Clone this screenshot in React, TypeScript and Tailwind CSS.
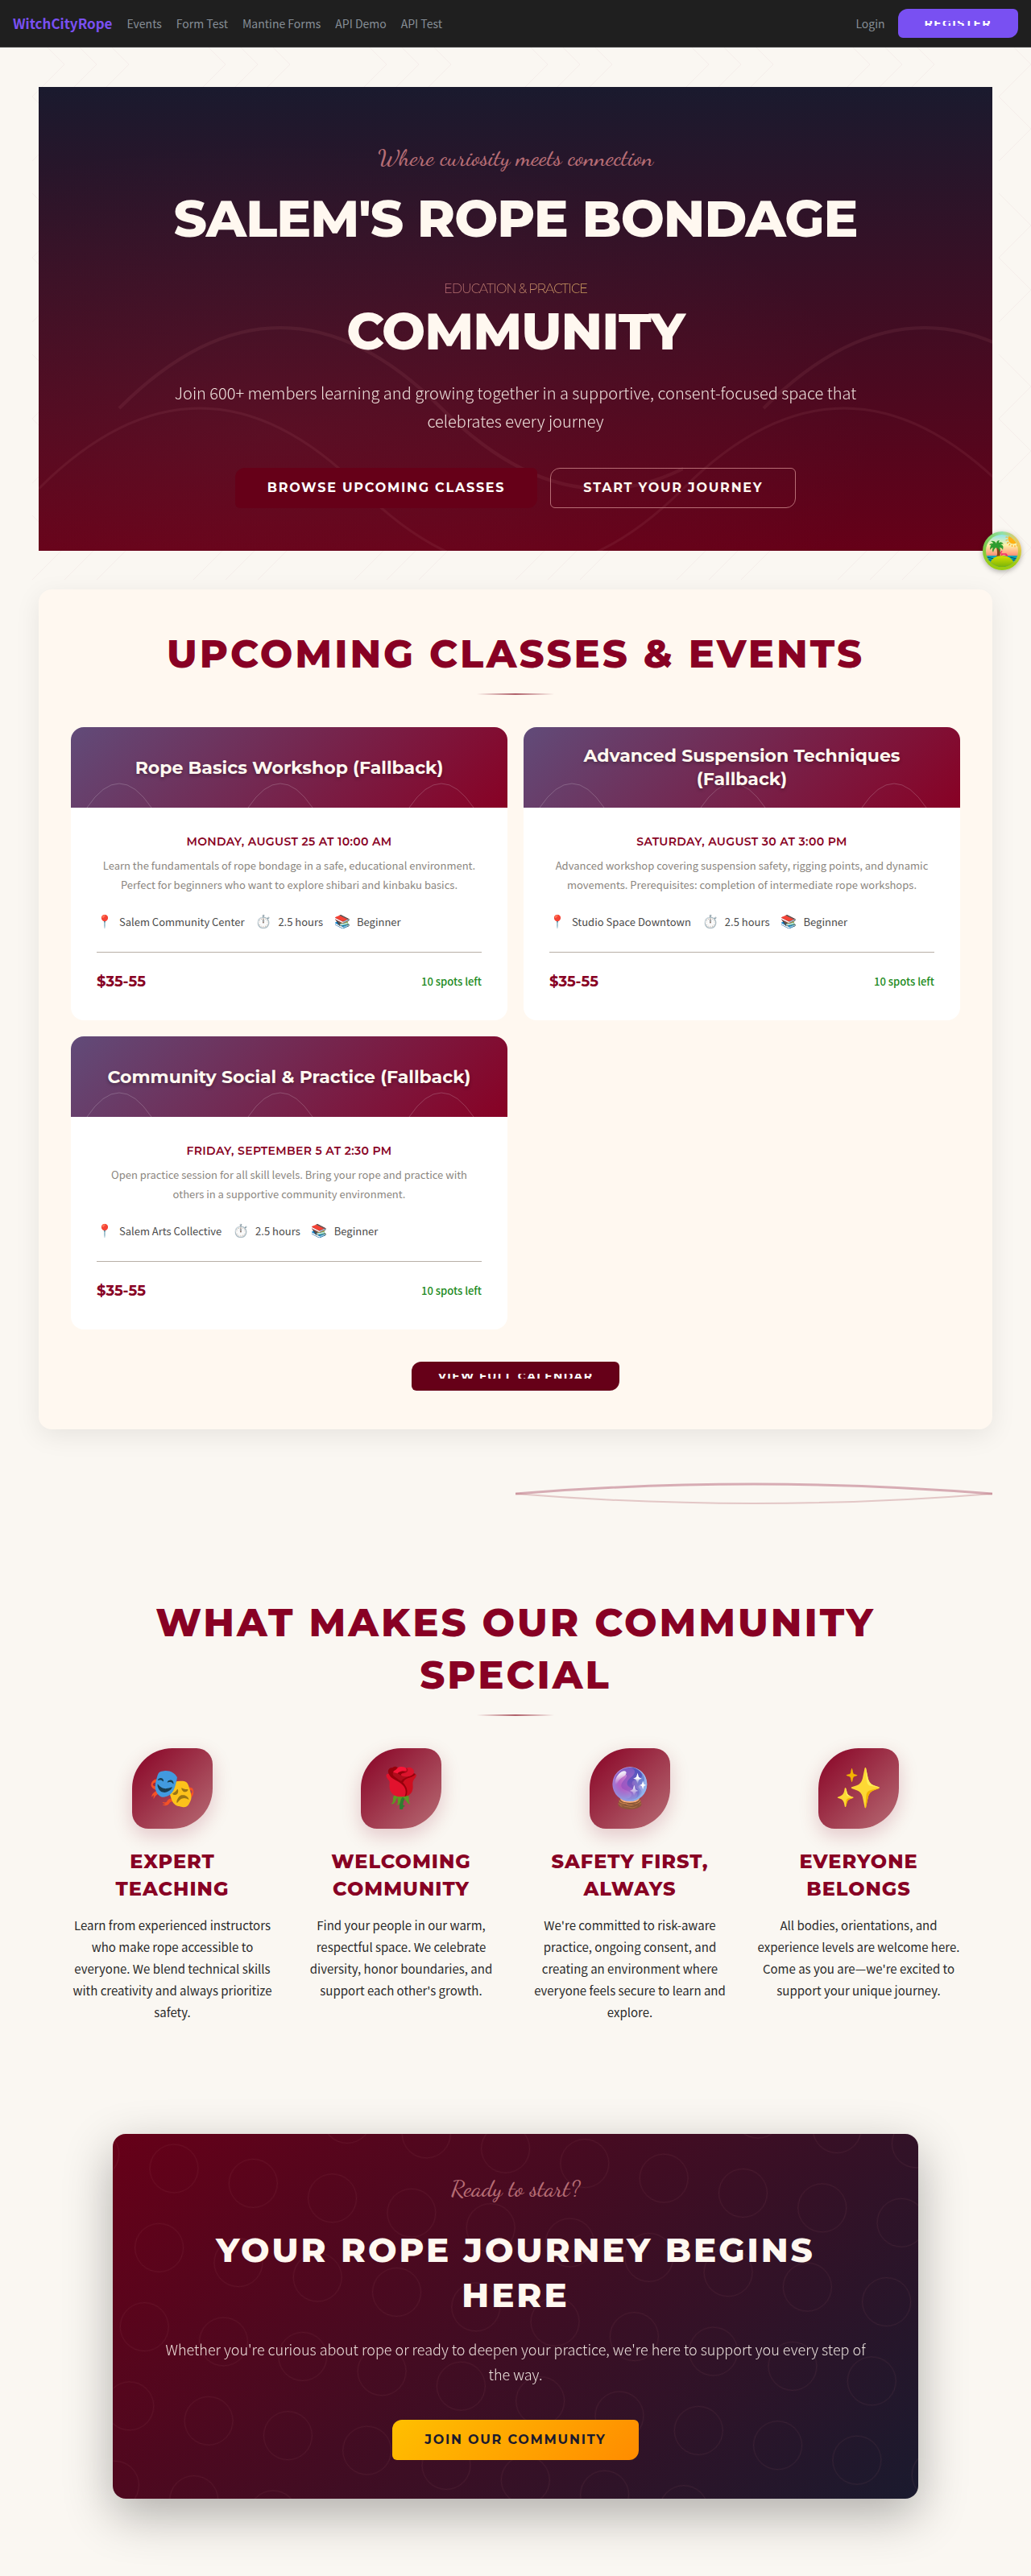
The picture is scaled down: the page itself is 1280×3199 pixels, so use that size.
import type { ReactNode } from "react";

const navLinks = ["Events", "Form Test", "Mantine Forms", "API Demo", "API Test"];

const events = [
  {
    title: "Rope Basics Workshop (Fallback)",
    date: "MONDAY, AUGUST 25 AT 10:00 AM",
    text: "Learn the fundamentals of rope bondage in a safe, educational environment. Perfect for beginners who want to explore shibari and kinbaku basics.",
    place: "Salem Community Center",
  },
  {
    title: "Advanced Suspension Techniques (Fallback)",
    date: "SATURDAY, AUGUST 30 AT 3:00 PM",
    text: "Advanced workshop covering suspension safety, rigging points, and dynamic movements. Prerequisites: completion of intermediate rope workshops.",
    place: "Studio Space Downtown",
  },
  {
    title: "Community Social & Practice (Fallback)",
    date: "FRIDAY, SEPTEMBER 5 AT 2:30 PM",
    text: "Open practice session for all skill levels. Bring your rope and practice with others in a supportive community environment.",
    place: "Salem Arts Collective",
  },
];

const features = [
  {
    icon: "🎭",
    title: "EXPERT TEACHING",
    text: "Learn from experienced instructors who make rope accessible to everyone. We blend technical skills with creativity and always prioritize safety.",
  },
  {
    icon: "🌹",
    title: "WELCOMING COMMUNITY",
    text: "Find your people in our warm, respectful space. We celebrate diversity, honor boundaries, and support each other's growth.",
  },
  {
    icon: "🔮",
    title: "SAFETY FIRST, ALWAYS",
    text: "We're committed to risk-aware practice, ongoing consent, and creating an environment where everyone feels secure to learn and explore.",
  },
  {
    icon: "✨",
    title: "EVERYONE BELONGS",
    text: "All bodies, orientations, and experience levels are welcome here. Come as you are—we're excited to support your unique journey.",
  },
];

const heading = "font-['Montserrat','Inter',sans-serif]";
const script = "font-['Satisfy','Dancing_Script','Lato',cursive] font-medium";
const buttonShape = "rounded-tl-[12px] rounded-tr-[6px] rounded-br-[12px] rounded-bl-[6px]";
const largeButton = `inline-flex h-[50px] items-center justify-center px-10 text-base font-bold tracking-[0.11em] ${heading} ${buttonShape}`;
const smallButton = `inline-flex h-9 items-center justify-center border border-transparent px-8 text-sm font-bold tracking-widest text-white ${heading} ${buttonShape}`;

function ClippedLabel({ children }: { children: ReactNode }) {
  return <span className="flex h-1.5 items-center overflow-hidden leading-5">{children}</span>;
}

function ZigzagBackdrop() {
  return (
    <svg className="pointer-events-none absolute inset-x-0 top-0 h-[720px] w-full" aria-hidden="true">
      <defs>
        <pattern id="zigzag" width="200" height="200" patternUnits="userSpaceOnUse" y="40">
          <g fill="none" stroke="#880124" strokeOpacity="0.04">
            <path d="M40 0 80 40 40 80 80 120 40 160" />
            <path d="M80 0 120 40 80 80 120 120 80 160" />
            <path d="M120 0 160 40 120 80 160 120 120 160" />
          </g>
        </pattern>
      </defs>
      <rect width="100%" height="100%" fill="url(#zigzag)" />
    </svg>
  );
}

function Header() {
  return (
    <header className="relative flex items-center justify-between border-b border-[#424242] bg-[#1f1f1f] px-4 py-[11px]">
      <nav className="flex items-center gap-[18px] text-sm text-[#868e96]">
        <a href="#" className="text-[17px] leading-6 font-bold text-[#7950f2]">
          WitchCityRope
        </a>
        {navLinks.map((link) => (
          <a key={link} href="#">
            {link}
          </a>
        ))}
      </nav>
      <div className="flex items-center gap-4">
        <a href="#" className="text-sm text-[#868e96]">
          Login
        </a>
        <button type="button" className={`${smallButton} bg-[#7950f2]`}>
          <ClippedLabel>REGISTER</ClippedLabel>
        </button>
      </div>
    </header>
  );
}

function Hero() {
  return (
    <section className="relative overflow-hidden bg-[radial-gradient(ellipse_at_25%_75%,rgba(183,109,117,0.08),transparent_60%),linear-gradient(180deg,#1a1a2e_0%,#660018_100%)] px-8 pt-16 pb-[53px] text-center">
      <svg className="absolute inset-0 h-full w-full" aria-hidden="true">
        <defs>
          <pattern id="waves" width="800" height="800" patternUnits="userSpaceOnUse">
            <g fill="none" stroke="#b76d75" strokeOpacity="0.12">
              <path d="M100 399Q300 199 500 399T900 399" strokeWidth="4" />
              <path d="M0 499Q200 299 400 499T800 499" strokeWidth="3" />
            </g>
          </pattern>
        </defs>
        <rect width="100%" height="100%" fill="url(#waves)" />
      </svg>
      <div className="relative flex flex-col items-center">
        <p className={`mb-4 text-[29px] leading-[48px] text-[#b76d75] ${script}`}>Where curiosity meets connection</p>
        <h1 className={`text-[64px] leading-[70px] font-extrabold tracking-[-1px] text-[#fff8f0] ${heading}`}>
          <span className="block">SALEM'S ROPE BONDAGE</span>
          <span className="mx-auto block w-fit bg-linear-to-r from-[#b76d75] to-[#d4a55f] bg-clip-text pt-9 text-base leading-[34px] font-light text-transparent">
            EDUCATION &amp; PRACTICE
          </span>
          <span className="block">COMMUNITY</span>
        </h1>
        <p className="mt-6 max-w-[900px] text-xl leading-[35px] font-light text-[#fff8f0] opacity-90">
          Join 600+ members learning and growing together in a supportive, consent-focused space that celebrates every
          journey
        </p>
        <div className="mt-[41px] flex flex-wrap justify-center gap-4">
          <a href="#" className={`${largeButton} bg-[#660018] text-white`}>
            BROWSE UPCOMING CLASSES
          </a>
          <a href="#" className={`${largeButton} border border-[#b76d75] text-[#fff8f0]`}>
            START YOUR JOURNEY
          </a>
        </div>
      </div>
    </section>
  );
}

function SectionTitle({ children }: { children: ReactNode }) {
  return (
    <div className="flex flex-col items-center text-center">
      <h2 className={`text-5xl leading-[65px] font-extrabold tracking-[3px] text-[#880124] ${heading}`}>{children}</h2>
      <div className="mt-4 h-0.5 w-24 bg-linear-to-r from-transparent via-[#b0606a] to-transparent" />
    </div>
  );
}

function EventCard({ title, date, text, place }: (typeof events)[number]) {
  return (
    <article className="overflow-hidden rounded-2xl bg-white">
      <div className="relative flex h-[100px] items-center justify-center bg-[linear-gradient(135deg,#614b79,#880124)] px-8 text-center">
        <svg className="absolute inset-0 h-full w-full" aria-hidden="true">
          <g fill="none" stroke="#ffffff" strokeOpacity="0.2">
            <path d="M20 100Q60 40 100 100" />
            <path d="M220 100Q260 40 300 100" />
            <path d="M420 100Q460 40 500 100" />
          </g>
        </svg>
        <h3
          className={`relative text-[22px] leading-[29px] font-bold text-[#fff8f0] [text-shadow:0_2px_4px_rgba(0,0,0,0.3)] ${heading}`}
        >
          {title}
        </h3>
      </div>
      <div className="p-8">
        <p className={`mb-2 text-center text-sm leading-5 font-semibold tracking-wide text-[#880124] ${heading}`}>
          {date}
        </p>
        <p className="text-center text-[13px] leading-6 text-[#8b8680]">{text}</p>
        <ul className="mt-6 flex flex-wrap gap-x-3.5 text-[13px] leading-5 text-[#4a4a4a]">
          {[
            ["📍", place],
            ["⏱️", "2.5 hours"],
            ["📚", "Beginner"],
          ].map(([icon, label]) => (
            <li key={label} className="flex items-center gap-2">
              <span className="font-['Noto_Color_Emoji'] text-base leading-5">{icon}</span>
              <span>{label}</span>
            </li>
          ))}
        </ul>
        <div className="mt-[27px] flex items-center justify-between border-t border-[#b8afa6] pt-5 leading-8">
          <span className={`text-lg leading-8 font-bold text-[#880124] ${heading}`}>$35-55</span>
          <span className="text-[13px] font-medium text-[#228b22]">10 spots left</span>
        </div>
      </div>
    </article>
  );
}

function Events() {
  return (
    <section className="relative mt-12 rounded-2xl bg-[#fff8f0] px-10 py-12 shadow-[0_8px_32px_rgba(0,0,0,0.08)]">
      <SectionTitle>UPCOMING CLASSES &amp; EVENTS</SectionTitle>
      <div className="mt-10 grid grid-cols-2 gap-5">
        {events.map((event) => (
          <EventCard key={event.title} {...event} />
        ))}
      </div>
      <div className="mt-10 flex justify-center">
        <button type="button" className={`${smallButton} bg-[#660018]`}>
          <ClippedLabel>VIEW FULL CALENDAR</ClippedLabel>
        </button>
      </div>
    </section>
  );
}

function RopeDivider() {
  return (
    <div className="mt-10 flex justify-end">
      <svg className="h-20 w-1/2" viewBox="0 0 592 80" preserveAspectRatio="none" fill="none" aria-hidden="true">
        <path d="M0 40Q296 16 592 40" stroke="#880124" strokeOpacity="0.3" strokeWidth="3" />
        <path d="M0 40Q296 64 592 40" stroke="#b76d75" strokeOpacity="0.35" strokeWidth="2" />
      </svg>
    </div>
  );
}

function Features() {
  return (
    <section className="px-10 pt-[88px]">
      <SectionTitle>WHAT MAKES OUR COMMUNITY SPECIAL</SectionTitle>
      <div className="mt-10 grid grid-cols-4 gap-8">
        {features.map(({ icon, title, text }) => (
          <div key={title} className="flex flex-col items-center text-center">
            <div className="flex size-[100px] items-center justify-center rounded-tl-[50px] rounded-tr-[20px] rounded-br-[50px] rounded-bl-[20px] bg-[linear-gradient(135deg,#880124,#b76d75)] shadow-[0_8px_24px_rgba(136,1,36,0.2)]">
              <span className="font-['Noto_Color_Emoji'] text-5xl leading-none">{icon}</span>
            </div>
            <h3
              className={`mt-6 px-4 text-2xl leading-[34px] font-extrabold tracking-[1px] text-[#880124] ${heading}`}
            >
              {title}
            </h3>
            <p className="mt-3.5 text-[15px] leading-[27px] text-[#2b2b2b]">{text}</p>
          </div>
        ))}
      </div>
    </section>
  );
}

function CallToAction() {
  return (
    <section className="relative mx-auto mt-[138px] max-w-[1000px] overflow-hidden rounded-2xl bg-[linear-gradient(135deg,#660018,#1a1a2e)] px-14 py-12 text-center shadow-[0_20px_60px_rgba(0,0,0,0.3)]">
      <svg className="absolute inset-0 h-full w-full" aria-hidden="true">
        <defs>
          <pattern
            id="rings"
            width="100"
            height="100"
            patternUnits="userSpaceOnUse"
            patternTransform="translate(76 43) rotate(10.6) translate(-50 -50)"
          >
            <circle cx="50" cy="50" r="30" fill="none" stroke="#b76d75" strokeOpacity="0.13" />
          </pattern>
        </defs>
        <rect width="100%" height="100%" fill="url(#rings)" />
      </svg>
      <div className="relative flex flex-col items-center">
        <p className={`text-[29px] leading-10 text-[#b76d75] ${script}`}>Ready to start?</p>
        <h2
          className={`mt-7 max-w-[800px] text-[42px] leading-[56px] font-extrabold tracking-[3px] text-[#fff8f0] ${heading}`}
        >
          YOUR ROPE JOURNEY BEGINS HERE
        </h2>
        <p className="mt-6 text-lg leading-[31px] font-light text-[#fff8f0] opacity-90">
          Whether you're curious about rope or ready to deepen your practice, we're here to support you every step of
          the way.
        </p>
        <a
          href="#"
          className={`mt-[41px] bg-[linear-gradient(135deg,#ffbf00,#ff8c00)] text-[#1a1a2e] ${largeButton}`}
        >
          JOIN OUR COMMUNITY
        </a>
      </div>
    </section>
  );
}

function DevtoolsButton() {
  return (
    <button
      type="button"
      aria-label="Open devtools"
      className="absolute top-[660px] right-3 size-12 rounded-full shadow-[0_2px_6px_rgba(0,0,0,0.3)]"
    >
      <svg viewBox="0 0 48 48" className="size-12" aria-hidden="true">
        <defs>
          <linearGradient id="ring-top" x1="0" y1="0" x2="1" y2="0">
            <stop offset="0" stopColor="#7ac943" />
            <stop offset="0.5" stopColor="#8fe0a8" />
            <stop offset="1" stopColor="#ffc44d" />
          </linearGradient>
          <linearGradient id="ring-bottom" x1="0" y1="0" x2="0" y2="1">
            <stop offset="0.35" stopColor="#8cc820" stopOpacity="0" />
            <stop offset="0.85" stopColor="#9ccc10" />
          </linearGradient>
          <linearGradient id="sky" x1="0" y1="0" x2="0" y2="1">
            <stop offset="0" stopColor="#6bdfff" />
            <stop offset="0.35" stopColor="#fff2a8" />
            <stop offset="0.68" stopColor="#ff7c6b" />
          </linearGradient>
          <linearGradient id="island" x1="0" y1="0" x2="0" y2="1">
            <stop offset="0" stopColor="#d9e000" />
            <stop offset="1" stopColor="#5ea80c" />
          </linearGradient>
          <clipPath id="scene">
            <circle cx="24" cy="24" r="20" />
          </clipPath>
        </defs>
        <circle cx="24" cy="24" r="24" fill="url(#ring-top)" />
        <circle cx="24" cy="24" r="24" fill="url(#ring-bottom)" />
        <g clipPath="url(#scene)">
          <rect width="48" height="48" fill="url(#sky)" />
          <g stroke="#ffa51f" strokeWidth="1.2" strokeLinecap="round">
            <path d="M29 7h1.5M29 11l1.5-.5M30.5 14.5l1.3-1M33 17l.8-1.3M36.5 18.5v-1.5M40 19v-1.5M43 18l-.5-1.3" />
          </g>
          <circle cx="38" cy="9" r="6.5" fill="#ffb114" />
          <rect y="30" width="48" height="18" fill="#0aa5b8" />
          <path
            d="M4 33q3-1.5 6 0t6 0M32 33q3-1.5 6 0t6 0M5 36q3-1.5 6 0M36 36q3-1.5 6 0"
            stroke="#06525f"
            fill="none"
          />
          <path d="M17 32q2-5 0-12l3-1q3 7 1 13z" fill="#8a4518" />
          <path d="M22 27.5l2-3.5M23 28h6l2 2.5M24 28.5l-1 2.5M29 28v3" stroke="#f2306a" strokeWidth="1.3" fill="none" />
          <path
            d="M18 19q-1-5-5-4-4 1-4 8 2-3 4-3-2 3 0 6 1-5 4-6 4 2 4 6 2-3 0-6 3 0 4 3 2-6-3-7 3-1 4 0-2-4-6-2 0-2 1-3-4 0-4 4-2-4-7-3 3 1 3 3-3-1-5 2 4-1 6 1z"
            fill="#2d9c2e"
          />
          <path d="M9 40q3-10 15-10t15 10v8H9z" fill="url(#island)" />
        </g>
      </svg>
    </button>
  );
}

export default function App() {
  return (
    <div className="relative min-h-screen bg-[#faf7f2] font-['Noto_Sans_CJK_SC',sans-serif]">
      <ZigzagBackdrop />
      <Header />
      <main className="relative px-12 pt-[49px] pb-24">
        <Hero />
        <Events />
        <RopeDivider />
        <Features />
        <CallToAction />
      </main>
      <DevtoolsButton />
    </div>
  );
}
